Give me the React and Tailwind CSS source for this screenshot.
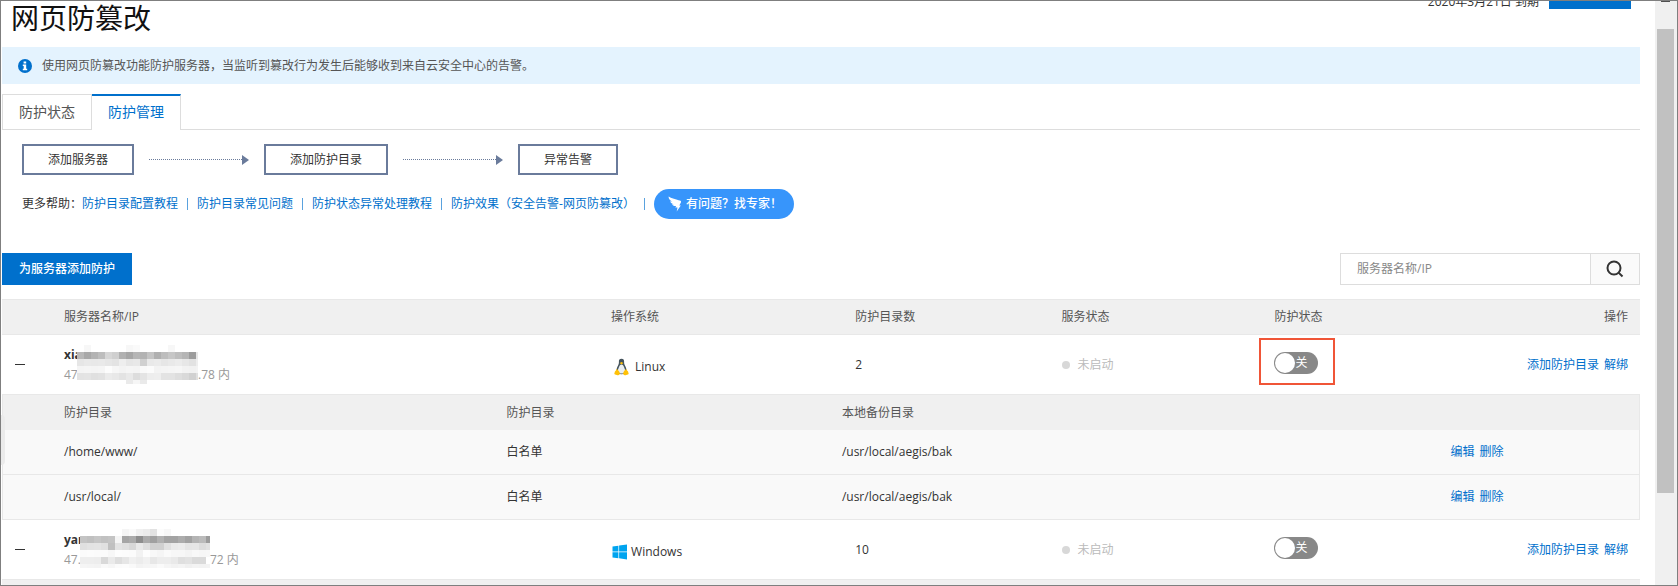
import React, { useState } from 'react';

const servers = [
  {
    id: 'linux-1',
    name: 'xia',
    ipStart: '47',
    ipEnd: '.78 内',
    os: 'Linux',
    count: 2,
    highlighted: true,
    mask: {
      left: 13,
      top: 9,
      width: 121,
      rows: [
        [0, 'f7', 0, 0, 0, 0, 0, 'f7', 'fa', 0, 0, 0, 0, 'f7', 0, 0, 0, 0],
        ['b7', 'a8', 'b3', 'bd', 'd6', 'cf', 'b1', 'a6', 'b5', 'b3', 'c4', 'b0', 'bd', 'c6', 'bd', 'b5', '9c', 'e6'],
        ['e6', 'e9', 'e8', 'e9', 'e6', 'e3', 'ee', 'e6', 'e8', 'd0', 'e9', 'eb', 'e6', 'e9', 'ec', 'e7', 'e2', 'ee'],
        ['f4', 'f5', 'f4', 'f5', 'fc', 'f6', 'f3', 'f5', 'f4', 'f9', 'fb', 'f3', 'f4', 'f5', 'f6', 'f2', 'f1', 'f3'],
        ['e3', 'e4', 'e0', 'e2', 'eb', 'e8', 'e3', 'e9', 'dd', 'e4', 'ed', 'ee', 'e3', 'e3', 'de', 'd9', 'd1', 'e0'],
        [0, 0, 0, 0, 0, 0, 0, 'ea', 'f6', 'ea', 0, 0, 0, 0, 0, 0, 0, 0],
      ],
    },
    dirs: [
      { path: '/home/www/', mode: '白名单', backup: '/usr/local/aegis/bak' },
      { path: '/usr/local/', mode: '白名单', backup: '/usr/local/aegis/bak' },
    ],
  },
  {
    id: 'windows-1',
    name: 'yan',
    ipStart: '47.',
    ipEnd: '72 内',
    os: 'Windows',
    count: 10,
    highlighted: false,
    mask: {
      left: 16,
      top: 8,
      width: 130,
      rows: [
        [0, 0, 0, 0, 0, 0, 'f5', 'fa', 'f0', 'ec', 'e2', 'fc', 'f7', 0, 0, 0, 0, 0, 0],
        ['c4', 'c0', 'c6', 'c1', 'c4', 'f5', 'a5', 'ab', '8e', 'ab', 'a0', 'b1', 'a3', 'a3', 'ac', 'a2', 'b4', 'bb', '9c'],
        ['e0', 'e3', 'e4', 'e0', 'c0', 'e3', 'df', 'd8', 'e9', 'df', 'd0', 'd0', 'e1', 'ea', 'ec', 'e5', 'e6', 'dd', 'e2'],
        ['fb', 'fc', 'fb', 'fb', 'f7', 'fd', 'fc', 'fb', 'f2', 'fd', 'f8', 'f5', 'fa', 'f7', 'f7', 'f4', 'f8', 'f6', 'f7'],
        ['ee', 'ee', 'ed', 'd9', 'ea', 'de', 'e6', 'f0', 'ec', 'f1', 'e7', 'ed', 'ed', 'e9', 'df', 'e2', 'da', 'da', 'ff'],
        ['f5', 'f4', 'f3', 'f9', 'f6', 'fb', 'fc', 'f9', 'f3', 'f5', 'f6', 'fa', 'f5', 'f2', 'f4', 'f0', 'f3', 'f2', 'f3'],
      ],
    },
    dirs: [],
  },
];

const helpLinks = [
  '防护目录配置教程',
  '防护目录常见问题',
  '防护状态异常处理教程',
  '防护效果（安全告警-网页防篡改）',
];

function InfoIcon() {
  return (
    <svg width="14" height="14" viewBox="0 0 14 14" aria-hidden="true">
      <circle cx="7" cy="7" r="7" fill="#0070cc" />
      <path d="M5.6 2.400h2.600v2.200H5.600zM4.800 5.500h3.400v4.300H9.200v1.500H4.800V9.800h.9V7H4.800z" fill="#fff" />
    </svg>
  );
}

function WingIcon() {
  return (
    <svg width="14" height="16" viewBox="0 0 14 16" aria-hidden="true">
      <path
        d="M.6.4C2.6 2 9 3.600 11.800 4.400c1.200.4 1.500 1 1.100 2L11.300 9.500h1.500L8.700 15.600l.8-4H7.300l.8-1.500C5.500 10 4.300 9 3.900 8.200l2 0C3.600 7.700 2.500 6.500 2.200 5.200l2 .2C1.500 4.200.5 2.400.6.400z"
        fill="#fff"
      />
    </svg>
  );
}

function SearchIcon() {
  return (
    <svg width="18" height="18" viewBox="0 0 18 18" fill="none" stroke="#333" strokeWidth="2" aria-hidden="true">
      <circle cx="8" cy="8" r="6.500" />
      <path d="M12.600 12.600 16.500 16.500" />
    </svg>
  );
}

function LinuxIcon() {
  return (
    <svg width="20" height="18" viewBox="0 0 20 18" aria-hidden="true">
      <path
        d="M10.500.8c-2 0-2.700 1.300-2.600 3 .1 1.800-.3 2.700-1.100 4.200C5.900 9.800 5.400 11.400 5.600 13c.2 2.200 2.300 3.300 4.900 3.300s4.700-1.100 4.900-3.300c.2-1.600-.3-3.200-1.200-5-.8-1.500-1.200-2.400-1.100-4.200.1-1.700-.6-3-2.600-3z"
        fill="#44535c"
      />
      <path
        d="M10.500 6.400c-1.400 0-1.900 1-2.500 2.500-.7 1.700-1.300 2.800-1.100 4.400.2 1.600 1.800 2.300 3.600 2.300s3.400-.7 3.600-2.300c.2-1.600-.4-2.700-1.100-4.400-.6-1.500-1.100-2.500-2.500-2.500z"
        fill="#e9eef1"
      />
      <path d="M8.700 5 10.500 4l1.800 1-1.800 1.500z" fill="#ffc107" />
      <path
        d="M5.700 11.300c1.100.2 1.900 1.500 2.700 2.700.9 1.400.6 3.100-1.100 3.200-1.100 0-2-.6-3.200-.8-.9-.2-.9-1-.5-1.700.2-.7.200-1.500.9-1.700.6-.2.500-1.800 1.200-1.700zM15.300 11.300c-1.100.2-1.900 1.500-2.700 2.700-.9 1.400-.6 3.100 1.100 3.200 1.100 0 2-.6 3.200-.8.9-.2.9-1 .5-1.700-.2-.7-.2-1.500-.9-1.700-.6-.2-.5-1.800-1.200-1.700z"
        fill="#ffc107"
      />
    </svg>
  );
}

function WindowsIcon() {
  return (
    <svg width="16" height="16" viewBox="0 0 16 16" fill="#00a4ef" aria-hidden="true">
      <path d="M1.500 2.500 7.400 1.700V7.600H1.500zM8.100 1.600 16 .5v7.100H8.100zM1.500 8.300h5.900v5.900L1.500 13.400zM8.100 8.300H16v7.200l-7.900-1.200z" />
    </svg>
  );
}

function MaskedText({ mask }) {
  return (
    <svg
      className="absolute"
      style={{ left: mask.left, top: mask.top }}
      width={mask.width}
      height="39"
      shapeRendering="crispEdges"
      aria-hidden="true"
    >
      {mask.rows.map((row, y) =>
        row.map((tone, x) =>
          tone ? (
            <rect key={`${x}-${y}`} x={x * 7} y={y * 7} width="7" height="7" fill={`#${tone}${tone}${tone}`} />
          ) : null
        )
      )}
    </svg>
  );
}

function StepArrow() {
  return (
    <div className="flex w-[100px] items-center">
      <div className="flex-1 border-t border-dotted border-[#6a7b9b]" />
      <svg width="7" height="10" viewBox="0 0 7 10" aria-hidden="true">
        <path d="M0 0 7 5 0 10z" fill="#6a7b9b" />
      </svg>
    </div>
  );
}

function Step({ children }) {
  return <div className="border-2 border-[#6a7b9b] px-6 leading-[27px] text-[#333]">{children}</div>;
}

function Toggle({ label, highlighted }) {
  const [on, setOn] = useState(false);

  return (
    <label className="relative flex h-[22px] w-11 cursor-pointer items-center rounded-full bg-[#888] text-white">
      <input
        type="checkbox"
        role="switch"
        aria-label={label}
        checked={on}
        onChange={(e) => setOn(e.target.checked)}
        className="peer sr-only"
      />
      <span className="ml-px size-5 rounded-full bg-white peer-checked:order-2" />
      <span>{on ? '开' : '关'}</span>
      {highlighted && (
        <span className="pointer-events-none absolute -top-[14px] -left-[15px] h-[47px] w-[76px] border-2 border-[#f05537]" />
      )}
    </label>
  );
}

function DirTable({ dirs }) {
  return (
    <table className="w-full table-fixed border-separate border-spacing-0 border-x border-[#e8e8e8] text-left">
      <colgroup>
        <col className="w-[29.8%]" />
        <col className="w-[20.5%]" />
        <col className="w-[37.2%]" />
        <col />
      </colgroup>
      <thead className="bg-[#f0f0f0] text-[#555]">
        <tr>
          <th className="h-[35px] pl-[61px] font-normal">防护目录</th>
          <th className="pl-4 font-normal">防护目录</th>
          <th className="pl-4 font-normal">本地备份目录</th>
          <th aria-label="操作" />
        </tr>
      </thead>
      <tbody className="bg-[#f9f9f9]">
        {dirs.map((dir) => (
          <tr key={dir.path}>
            <td className="h-[45px] border-b border-[#e8e8e8] pl-[61px]">{dir.path}</td>
            <td className="border-b border-[#e8e8e8] pl-4">{dir.mode}</td>
            <td className="border-b border-[#e8e8e8] pl-4">{dir.backup}</td>
            <td className="border-b border-[#e8e8e8] pl-4">
              <div className="flex gap-[5px] text-[#0070cc]">
                <a href="#edit">编辑</a>
                <a href="#delete">删除</a>
              </div>
            </td>
          </tr>
        ))}
      </tbody>
    </table>
  );
}

function ServerRow({ server }) {
  const { mask } = server;

  return (
    <tr>
      <td className="h-[60px] border-b border-[#e8e8e8] pl-[13px]">
        <button type="button" aria-label="收起" className="block py-2">
          <span className="block h-px w-[10px] bg-[#333]" />
        </button>
      </td>
      <td className="border-b border-[#e8e8e8] pl-4 leading-5">
        <div className="relative">
          <div className="font-bold">{server.name}</div>
          <div className="flex text-[#999]">
            <span style={{ width: mask.left + mask.width }}>{server.ipStart}</span>
            <span>{server.ipEnd}</span>
          </div>
          <div className="absolute -top-[9px] left-0">
            <MaskedText mask={mask} />
          </div>
        </div>
      </td>
      <td className="border-b border-[#e8e8e8] pt-1 pl-4">
        <div className="flex items-center gap-1">
          {server.os === 'Linux' ? <LinuxIcon /> : <WindowsIcon />}
          <span>{server.os}</span>
        </div>
      </td>
      <td className="border-b border-[#e8e8e8] pl-4">{server.count}</td>
      <td className="border-b border-[#e8e8e8] pl-4 text-[#bbb]">
        <div className="flex items-center gap-2">
          <span className="size-2 rounded-full bg-[#d8d8d8]" />
          <span>未启动</span>
        </div>
      </td>
      <td className="border-b border-[#e8e8e8] pb-[3px] pl-4">
        <Toggle label={`${server.os} 防护状态`} highlighted={server.highlighted} />
      </td>
      <td className="border-b border-[#e8e8e8] pr-3">
        <div className="flex justify-end gap-[5px] text-[#0070cc]">
          <a href="#add-dir">添加防护目录</a>
          <a href="#unbind">解绑</a>
        </div>
      </td>
    </tr>
  );
}

function ServerTable() {
  return (
    <table className="mt-[14px] w-full table-fixed border-separate border-spacing-0 text-left">
      <colgroup>
        <col className="w-[46px]" />
        <col className="w-[33.4%]" />
        <col className="w-[14.9%]" />
        <col className="w-[12.6%]" />
        <col className="w-[13%]" />
        <col className="w-[11%]" />
        <col />
      </colgroup>
      <thead className="bg-[#f0f0f0] text-[#555]">
        <tr>
          <th aria-label="展开" className="h-9 border-y border-[#e8e8e8]" />
          <th className="border-y border-[#e8e8e8] pl-4 font-normal">服务器名称/IP</th>
          <th className="border-y border-[#e8e8e8] pl-4 font-normal">操作系统</th>
          <th className="border-y border-[#e8e8e8] pl-4 font-normal">防护目录数</th>
          <th className="border-y border-[#e8e8e8] pl-4 font-normal">服务状态</th>
          <th className="border-y border-[#e8e8e8] pl-4 font-normal">防护状态</th>
          <th className="border-y border-[#e8e8e8] pr-3 text-right font-normal">操作</th>
        </tr>
      </thead>
      <tbody>
        {servers.map((server) => (
          <React.Fragment key={server.id}>
            <ServerRow server={server} />
            <tr>
              <td colSpan={7} className="p-0">
                {server.dirs.length > 0 ? <DirTable dirs={server.dirs} /> : <div className="h-9 bg-[#f0f0f0]" />}
              </td>
            </tr>
          </React.Fragment>
        ))}
      </tbody>
    </table>
  );
}

export default function App() {
  const [keyword, setKeyword] = useState('');

  return (
    <div className="relative flex h-screen overflow-hidden border border-[#7f7f7f] bg-white font-['Open_Sans','Noto_Sans_CJK_SC',sans-serif] text-xs text-[#333]">
      <main className="min-w-0 flex-1 overflow-hidden pr-[15px] pl-px">
        <header className="-mt-6 flex h-[70px] items-start pr-[9px] pl-[9px]">
          <h1 className="mt-[21px] text-[28px] leading-10 text-[#111]">网页防篡改</h1>
          <span className="mt-[15px] mr-[10px] ml-auto leading-5">2020年3月21日 到期</span>
          <button type="button" aria-label="续费" className="h-8 w-[82px] bg-[#0070cc]" />
        </header>

        <div className="flex h-[37px] items-center gap-[10px] bg-[#e4f3fe] px-4 text-[#555]">
          <InfoIcon />
          <p>使用网页防篡改功能防护服务器，当监听到篡改行为发生后能够收到来自云安全中心的告警。</p>
        </div>

        <nav className="mt-[10px] flex h-9 border-b border-[#ddd] text-sm">
          <a href="#status" className="flex items-center border-x border-t border-[#ddd] px-4 text-[#555]">
            防护状态
          </a>
          <a
            href="#manage"
            className="-mb-px flex items-center border-t-2 border-r border-t-[#0070cc] border-r-[#ddd] bg-white px-4 pb-0.5 text-[#0070cc]"
          >
            防护管理
          </a>
        </nav>

        <div className="mt-[14px] flex gap-[15px] pl-5">
          <Step>添加服务器</Step>
          <StepArrow />
          <Step>添加防护目录</Step>
          <StepArrow />
          <Step>异常告警</Step>
        </div>

        <div className="mt-[14px] flex items-center pl-5 text-[#0070cc]">
          <span className="text-[#333]">更多帮助：</span>
          {helpLinks.map((link) => (
            <React.Fragment key={link}>
              <a href="#help">{link}</a>
              <span className="mx-[9px] h-3 w-px bg-[#5aa2de]" />
            </React.Fragment>
          ))}
          <button
            type="button"
            className="flex h-[30px] items-center gap-1 rounded-full bg-[#3795fb] pr-3 pl-[14px] font-medium text-white"
          >
            <WingIcon />
            有问题？找专家！
          </button>
        </div>

        <div className="mt-[34px] flex h-8 justify-between">
          <button type="button" className="bg-[#0070cc] px-[17px] font-medium text-white">
            为服务器添加防护
          </button>
          <form className="flex w-[300px] border border-[#ddd]" onSubmit={(e) => e.preventDefault()}>
            <input
              type="text"
              aria-label="服务器名称/IP"
              placeholder="服务器名称/IP"
              value={keyword}
              onChange={(e) => setKeyword(e.target.value)}
              className="min-w-0 flex-1 px-4 outline-none placeholder:text-[#888]"
            />
            <button
              type="submit"
              aria-label="搜索"
              className="flex w-[49px] items-center justify-center border-l border-[#ddd] bg-[#fafafa]"
            >
              <SearchIcon />
            </button>
          </form>
        </div>

        <ServerTable />
      </main>

      <div className="w-[22px] bg-[#f0f0f0] pr-[3px] pl-[2px]">
        <div className="mx-auto h-px w-[9px] bg-[#505050]" />
        <div className="mt-[27px] h-[464px] bg-[#c1c1c1]" />
      </div>

      {/* drawer handle on the left edge */}
      <div className="absolute top-[414px] left-0 h-[50px] w-1 rounded-r-sm bg-[#ebebeb]" />
    </div>
  );
}
